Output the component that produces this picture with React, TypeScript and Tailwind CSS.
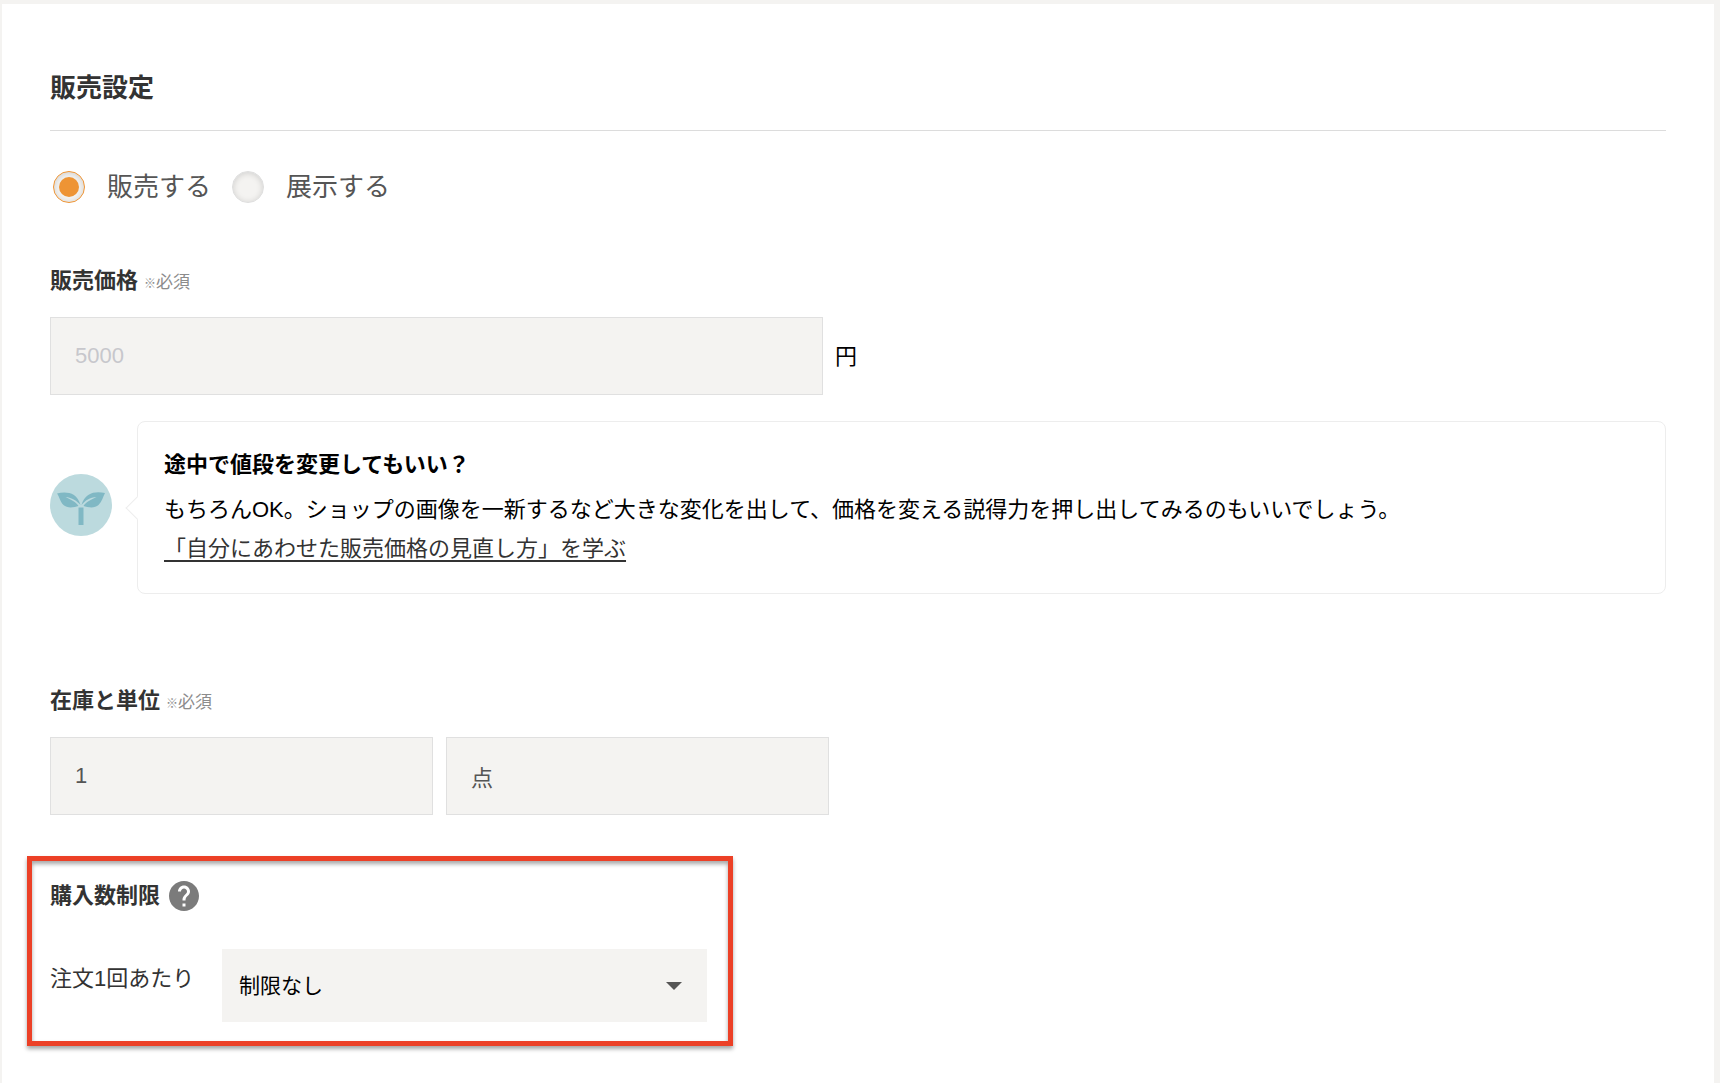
import { useState, type InputHTMLAttributes } from "react";
import { MdHelp } from "react-icons/md";
import clsx from "clsx";

const SALE_TYPES = [
  { value: "sell", label: "販売する" },
  { value: "display", label: "展示する" },
];

function Required() {
  return (
    <span className="ml-1.5 text-[17px] font-normal text-[#8c8c8c]">
      <span className="text-[12px]">※</span>必須
    </span>
  );
}

function TextField({ className, ...props }: InputHTMLAttributes<HTMLInputElement>) {
  return (
    <input
      type="text"
      className={clsx(
        "h-[78px] w-full min-w-0 border border-[#e0e0e0] bg-[#f4f3f1] px-6 text-[22px] text-[#555] outline-none placeholder:text-[#c7c7cc]",
        className
      )}
      {...props}
    />
  );
}

function SproutIcon() {
  return (
    <svg viewBox="0 0 62 62" className="mb-1.5 size-[62px] shrink-0" aria-hidden="true">
      <circle cx="31" cy="31" r="31" fill="#bcdade" />
      <g fill="#80b8c4">
        <path d="M28.500 33.500h5v17.500h-5z" />
        <path d="M7 19.500C15 17.500 27 17.500 30.500 31C27 27 22 23.500 15.500 23C21 25.500 26 28 28.500 32C24 33.500 17 34.500 13.500 31C10 27.500 9.500 23 7 19.500Z" />
        <path d="M55 19C47 17 35 17.500 31.500 31C35 26.500 40 23.500 46.500 23C41 25.500 36 28 33.500 32C38 33.500 45 34.500 48.500 31C52 27.500 53 23 55 19Z" />
      </g>
    </svg>
  );
}

function PriceTip() {
  return (
    <div className="mt-[26px] flex items-center gap-[25px]">
      <SproutIcon />
      <div className="relative flex-1 rounded-lg border border-[#ededed] px-[26px] pt-[23px] pb-[26px] text-[22px] text-black">
        <span className="absolute top-1/2 -left-[9px] size-[17px] -translate-y-1/2 rotate-45 border-b border-l border-[#ededed] bg-white" />
        <p className="leading-10 font-bold">途中で値段を変更してもいい？</p>
        <p className="mt-1 leading-[42px]">
          もちろんOK。ショップの画像を一新するなど大きな変化を出して、価格を変える説得力を押し出してみるのもいいでしょう。
        </p>
        <a
          href="#"
          className="block w-fit leading-9 text-[#333] underline decoration-2 underline-offset-4"
        >
          「自分にあわせた販売価格の見直し方」を学ぶ
        </a>
      </div>
    </div>
  );
}

export default function App() {
  const [saleType, setSaleType] = useState("sell");

  return (
    <div className="flex min-h-screen bg-[#f4f3f1] pt-1 pr-1.5 pl-0.5 font-['Liberation_Sans','Noto_Sans_CJK_JP',sans-serif] text-[#333]">
      <main className="flex-1 bg-white px-12 pt-16 pb-9">
        <h2 className="border-b border-[#dcdcdc] pb-[22px] text-[26px] leading-10 font-bold">
          販売設定
        </h2>

        <div className="mt-10 flex items-center gap-[21px] pl-[3px]">
          {SALE_TYPES.map(({ value, label }) => (
            <label
              key={value}
              className="flex items-center gap-[22px] text-[26px] leading-8 text-[#555]"
            >
              <input
                type="radio"
                name="saleType"
                value={value}
                checked={saleType === value}
                onChange={() => setSaleType(value)}
                className="grid size-8 appearance-none place-items-center rounded-full border border-[#dedede] bg-[#f4f3f1] shadow-[inset_0_1px_6px_rgba(0,0,0,0.15)] before:size-5 before:rounded-full checked:border-[#ee9434] checked:before:bg-[#ee9434]"
              />
              {label}
            </label>
          ))}
        </div>

        <label htmlFor="price" className="mt-[62px] block h-8 text-[22px] leading-8 font-bold">
          販売価格
          <Required />
        </label>
        <div className="mt-5 flex items-center gap-3">
          <TextField id="price" placeholder="5000" className="max-w-[773px]" />
          <span className="text-[22px] text-black">円</span>
        </div>

        <PriceTip />

        <label htmlFor="stock" className="mt-[91px] block h-8 text-[22px] leading-8 font-bold">
          在庫と単位
          <Required />
        </label>
        <div className="mt-5 flex max-w-[779px] gap-[13px]">
          <TextField id="stock" defaultValue="1" />
          <TextField aria-label="単位" defaultValue="点" />
        </div>

        <section className="mt-[41px] -ml-[23px] w-fit border-5 border-[#ec4026] py-[19px] pr-[21px] pl-[18px] shadow-[0_3px_4px_rgba(0,0,0,0.35),inset_0_3px_4px_rgba(0,0,0,0.35)]">
          <div className="flex h-8 items-center gap-1.5">
            <h3 className="text-[22px] leading-8 font-bold">購入数制限</h3>
            <button type="button" aria-label="ヘルプ" className="text-[#7b7b7b]">
              <MdHelp className="size-9" />
            </button>
          </div>
          <div className="mt-[37px] flex items-start">
            <label htmlFor="limit" className="w-[172px] shrink-0 text-[22px] leading-[60px]">
              注文1回あたり
            </label>
            <div className="relative">
              <select
                id="limit"
                className="h-[73px] w-[485px] appearance-none bg-[#f4f3f1] px-[17px] text-[21px] text-black outline-none"
              >
                <option>制限なし</option>
              </select>
              <svg
                viewBox="0 0 16 8"
                className="pointer-events-none absolute top-[33px] right-[25px] h-2 w-4 fill-[#555]"
                aria-hidden="true"
              >
                <path d="M0 0h16L8 8z" />
              </svg>
            </div>
          </div>
        </section>
      </main>
    </div>
  );
}
